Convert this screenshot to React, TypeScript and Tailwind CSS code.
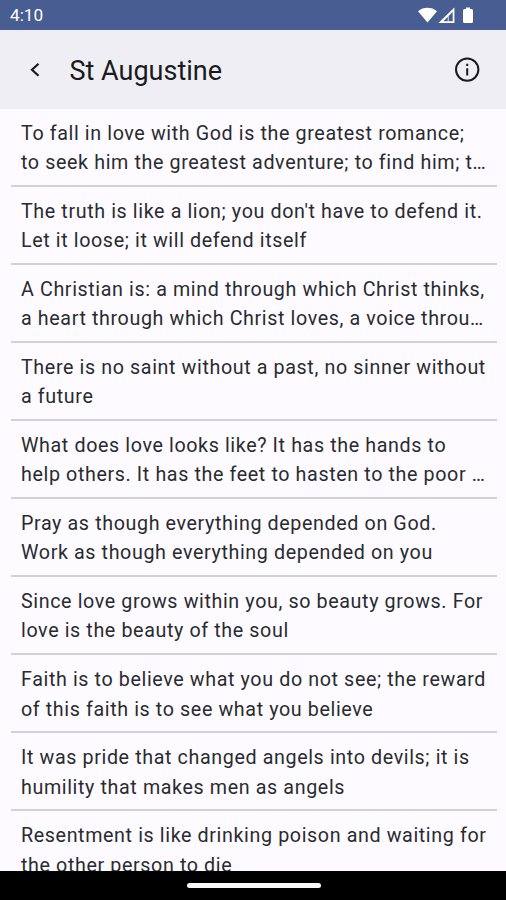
import React from "react";

interface Quote {
  first: string;
  second: string;
}

const quotes: Quote[] = [
  {
    first: "To fall in love with God is the greatest romance;",
    second: "to seek him the greatest adventure; to find him; t…",
  },
  {
    first: "The truth is like a lion; you don't have to defend it.",
    second: "Let it loose; it will defend itself",
  },
  {
    first: "A Christian is: a mind through which Christ thinks,",
    second: "a heart through which Christ loves, a voice throu…",
  },
  {
    first: "There is no saint without a past, no sinner without",
    second: "a future",
  },
  {
    first: "What does love looks like? It has the hands to",
    second: "help others. It has the feet to hasten to the poor …",
  },
  {
    first: "Pray as though everything depended on God.",
    second: "Work as though everything depended on you",
  },
  {
    first: "Since love grows within you, so beauty grows. For",
    second: "love is the beauty of the soul",
  },
  {
    first: "Faith is to believe what you do not see; the reward",
    second: "of this faith is to see what you believe",
  },
  {
    first: "It was pride that changed angels into devils; it is",
    second: "humility that makes men as angels",
  },
  {
    first: "Resentment is like drinking poison and waiting for",
    second: "the other person to die",
  },
];

const StatusBar = () => (
  <div className="flex h-[30px] shrink-0 items-center justify-between bg-[#485d92] pr-[31px] pl-[10px] text-white">
    <span className="pt-[2px] text-[17.2px] leading-none">4:10</span>
    <svg width="57" height="18" viewBox="0 0 57 18" fill="currentColor">
      <path d="M0 5.2C5.5 0.6 13.5 0.6 19 5.2L9.5 16.5Z" />
      <path d="M36.4 1.5V17H20.4Z M34.7 5.8L30.6 10V15.3H34.7Z M29.8 10.8L25.4 15.3H29.8Z" fillRule="evenodd" />
      <path d="M46.5 3H48V1.5H52V3H53.5Q55 3 55 4.5V15.5Q55 17 53.5 17H46.5Q45 17 45 15.5V4.5Q45 3 46.5 3Z" />
    </svg>
  </div>
);

const Header = () => (
  <header className="flex h-[79px] shrink-0 items-center bg-[#efeef4] pr-[26px] pl-[29px] text-[#1a1b20]">
    <svg width="12" height="16" viewBox="0 0 12 16" fill="none" stroke="currentColor" strokeWidth="2.2">
      <path d="M9.5 1.8L3 7.8L9.5 13.8" />
    </svg>
    <h1 className="ml-[28.5px] flex-1 pt-[4px] text-[27px] leading-none">St Augustine</h1>
    <svg width="26" height="26" viewBox="0 0 26 26" fill="none" stroke="currentColor" strokeWidth="2">
      <circle cx="13.2" cy="12.6" r="11.2" />
      <path d="M13.2 11.3V18.4M13.2 6.8V9" />
    </svg>
  </header>
);

const QuoteRow = ({ first, second }: Quote) => (
  <li className="h-[78.05px] shrink-0 border-b-2 border-[#d2d1d6] pt-[9.7px] pl-[10.5px] text-[19.7px] leading-[29.5px] tracking-[0.615px] whitespace-nowrap text-[#2a2b30]">
    <p>{first}</p>
    <p>{second}</p>
  </li>
);

const App = () => (
  <div className="flex h-[900px] w-[506px] flex-col overflow-hidden bg-[#fdfbff] font-['Roboto',sans-serif]">
    <StatusBar />
    <Header />
    <ul className="flex min-h-0 flex-1 flex-col overflow-hidden pr-[9px] pl-[10.5px]">
      {quotes.map((quote) => (
        <QuoteRow key={quote.first} {...quote} />
      ))}
    </ul>
    <div className="flex h-[29px] shrink-0 items-center justify-center bg-black pl-[1px]">
      <div className="h-[5px] w-[134px] rounded-full bg-[#f8f8f8]" />
    </div>
  </div>
);

export default App;
